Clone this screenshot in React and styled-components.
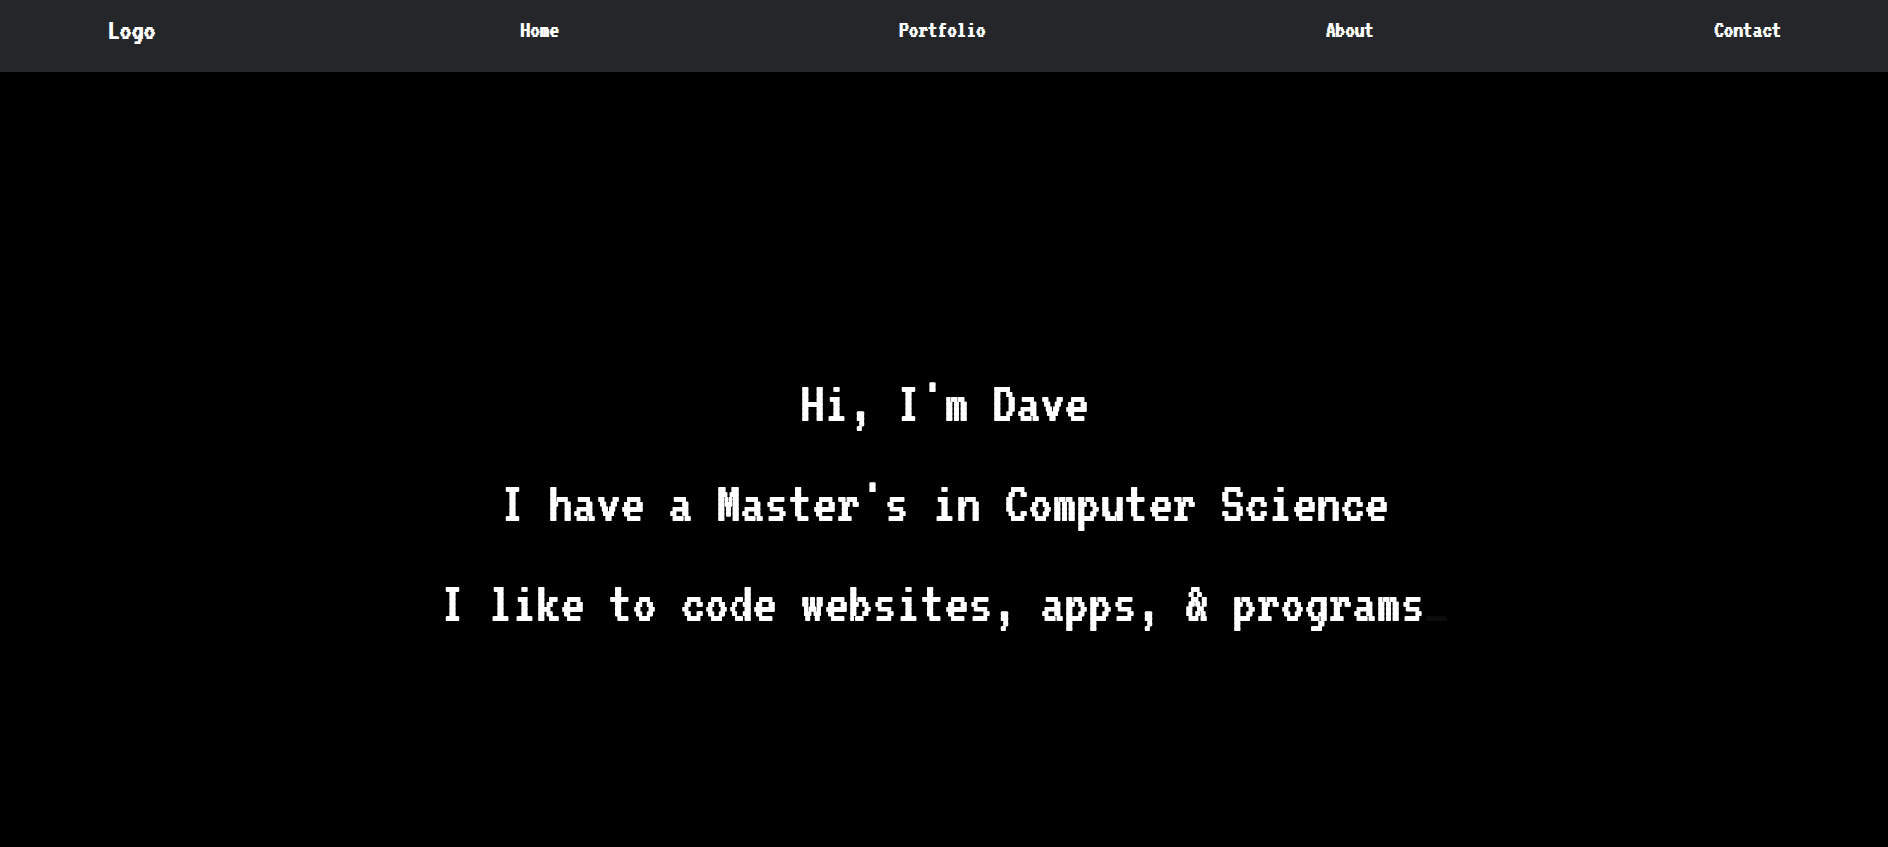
import React from "react";
import styled, { createGlobalStyle } from "styled-components";

const GlobalStyle = createGlobalStyle`
  * { box-sizing: border-box; }
  body {
    margin: 0;
    background: #000;
    color: #fff;
    font-family: "VT323", "DejaVu Sans Mono", monospace;
    text-shadow: 1px 0 0 currentColor;
  }
`;

const Page = styled.div`
  min-height: 100vh;
  display: flex;
  flex-direction: column;
`;

const Header = styled.header`
  display: grid;
  grid-template-columns: 19fr 58fr;
  align-items: start;
  height: 72px;
  padding: 17px 107px 0;
  background: #24262a;
`;

const Logo = styled.a`
  justify-self: start;
  color: #fff;
  font-size: 30px;
  line-height: 26px;
  text-decoration: none;
`;

const NavList = styled.ul`
  display: flex;
  justify-content: space-between;
  margin: 0;
  padding: 0;
  list-style: none;
`;

const NavLink = styled.a`
  color: #fff;
  font-size: 24px;
  line-height: 26px;
  text-decoration: none;
`;

const Hero = styled.main`
  flex: 1;
  display: flex;
  flex-direction: column;
  justify-content: center;
  padding-top: 86px;
  text-align: center;
`;

const Line = styled.p`
  margin: 0;
  font-size: 60px;
  line-height: 100px;
`;

const Cursor = styled.span`
  color: #0c0c0c;
`;

const links = ["Home", "Portfolio", "About", "Contact"];

export default function App() {
  return (
    <Page>
      <GlobalStyle />
      <Header>
        <Logo href="#">Logo</Logo>
        <nav>
          <NavList>
            {links.map((label) => (
              <li key={label}>
                <NavLink href={`#${label.toLowerCase()}`}>{label}</NavLink>
              </li>
            ))}
          </NavList>
        </nav>
      </Header>
      <Hero>
        <Line>Hi, I'm Dave</Line>
        <Line>I have a Master's in Computer Science</Line>
        <Line>
          I like to code websites, apps, &amp; programs
          <Cursor aria-hidden="true">_</Cursor>
        </Line>
      </Hero>
    </Page>
  );
}
